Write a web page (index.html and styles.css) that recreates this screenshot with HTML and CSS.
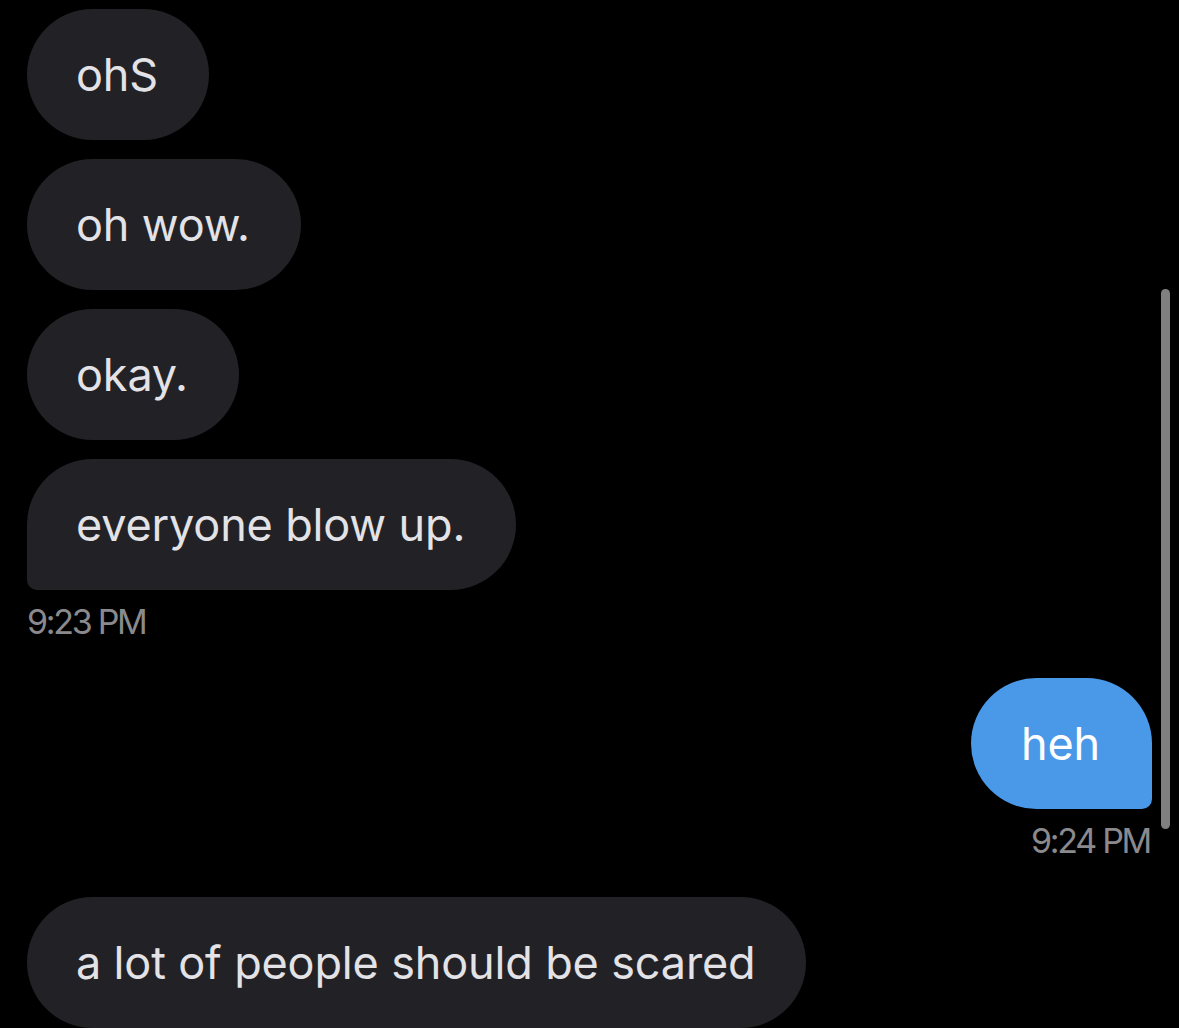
FILE: index.html
```html
<!DOCTYPE html>
<html>
<head>
<meta charset="utf-8">
<link rel="stylesheet" href="styles.css">
</head>
<body>
<div class="chat">
  <div class="msg in"><div class="bubble">ohS</div></div>
  <div class="msg in"><div class="bubble">oh wow.</div></div>
  <div class="msg in"><div class="bubble">okay.</div></div>
  <div class="msg in"><div class="bubble tail-left">everyone blow up.</div></div>
  <div class="time">9:23 PM</div>
  <div class="msg out"><div class="bubble blue tail-right">heh</div></div>
  <div class="time right">9:24 PM</div>
  <div class="msg in last"><div class="bubble">a lot of people should be scared</div></div>
</div>
<div class="scrollbar"></div>
</body>
</html>
```
FILE: styles.css
```css
html, body {
  margin: 0;
  padding: 0;
  background: #000;
  height: 100%;
  overflow: hidden;
}
body {
  font-family: Inter, "Liberation Sans", sans-serif;
  position: relative;
}
.chat {
  display: flex;
  flex-direction: column;
  padding: 9px 27px 0 27px;
  gap: 19px;
}
.msg {
  display: flex;
}
.msg.out {
  justify-content: flex-end;
  margin-top: 17px;
}
.msg.last {
  margin-top: 17px;
}
.bubble {
  box-sizing: border-box;
  height: 131px;
  display: flex;
  align-items: center;
  padding: 0 51px 0 49px;
  background: #222226;
  color: #e3e3e7;
  font-size: 45px;
  letter-spacing: -0.15px;
  border-radius: 66px;
  white-space: nowrap;
}
.bubble.tail-left {
  border-bottom-left-radius: 10px;
}
.bubble.blue {
  background: #4a99e9;
  color: #fff;
  padding: 0 52px 0 50px;
}
.bubble.tail-right {
  border-bottom-right-radius: 10px;
}
.time {
  color: #8a8a8e;
  font-size: 34px;
  line-height: 40px;
  letter-spacing: -2.3px;
  margin-top: -7px;
}
.time.right {
  text-align: right;
  margin-right: 2px;
}
.scrollbar {
  position: absolute;
  left: 1161px;
  top: 289px;
  width: 9px;
  height: 540px;
  border-radius: 5px;
  background: #808080;
}
```
